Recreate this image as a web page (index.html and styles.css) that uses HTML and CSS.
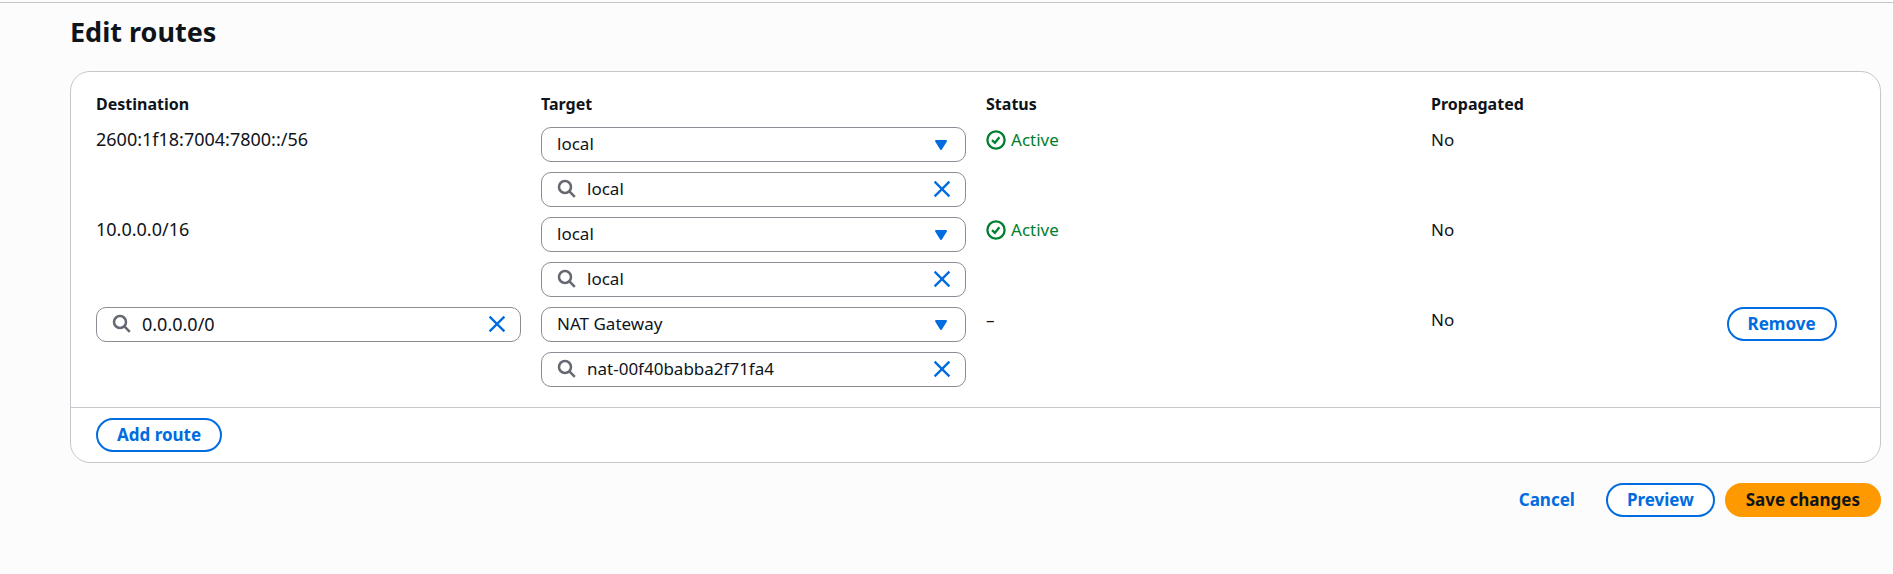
FILE: index.html
```html
<!DOCTYPE html>
<html lang="en">
<head>
<meta charset="utf-8">
<title>Edit routes</title>
<link rel="stylesheet" href="styles.css">
</head>
<body>
<svg class="sprite" aria-hidden="true">
  <symbol id="search" viewBox="0 0 20 20"><g stroke-width="2.5"><circle cx="8" cy="8" r="6" /><path d="M12.4 12.4 17.8 17.8" /></g></symbol>
  <symbol id="close" viewBox="0 0 20 20"><path stroke-width="2.3" d="M2.6 2.6 17.4 17.4M17.4 2.6 2.6 17.4" /></symbol>
  <symbol id="caret" viewBox="0 0 20 20"><path d="M5 6h10L10 14z" /></symbol>
  <symbol id="check" viewBox="0 0 20 20"><g stroke-width="2.3"><circle cx="10" cy="10" r="8.6" /><path d="M6 10.2 8.9 12.8 13.4 7.2" /></g></symbol>
</svg>
<main class="page">
  <h1 class="title">Edit routes</h1>
  <form class="form">
    <section class="card">
      <div class="card-body">
        <table class="routes">
          <colgroup><col class="wide"><col class="wide"><col class="wide"><col class="medium"><col></colgroup>
          <thead>
            <tr><th scope="col">Destination</th><th scope="col">Target</th><th scope="col">Status</th><th scope="col">Propagated</th><td></td></tr>
          </thead>
          <tbody>
            <tr>
              <td class="cidr">2600:1f18:7004:7800::/56</td>
              <td>
                <div class="target">
                  <div class="select"><select aria-label="Target type, route 1"><option>local</option></select><svg class="icon caret"><use href="#caret"/></svg></div>
                  <div class="field"><svg class="icon search"><use href="#search"/></svg><input type="text" aria-label="Target, route 1" value="local"><button type="button" class="clear" aria-label="Clear"><svg class="icon"><use href="#close"/></svg></button></div>
                </div>
              </td>
              <td><span class="status"><svg class="icon"><use href="#check"/></svg>Active</span></td>
              <td>No</td>
              <td></td>
            </tr>
            <tr>
              <td class="cidr">10.0.0.0/16</td>
              <td>
                <div class="target">
                  <div class="select"><select aria-label="Target type, route 2"><option>local</option></select><svg class="icon caret"><use href="#caret"/></svg></div>
                  <div class="field"><svg class="icon search"><use href="#search"/></svg><input type="text" aria-label="Target, route 2" value="local"><button type="button" class="clear" aria-label="Clear"><svg class="icon"><use href="#close"/></svg></button></div>
                </div>
              </td>
              <td><span class="status"><svg class="icon"><use href="#check"/></svg>Active</span></td>
              <td>No</td>
              <td></td>
            </tr>
            <tr>
              <td>
                <div class="field"><svg class="icon search"><use href="#search"/></svg><input class="cidr" type="text" aria-label="Destination, route 3" value="0.0.0.0/0"><button type="button" class="clear" aria-label="Clear"><svg class="icon"><use href="#close"/></svg></button></div>
              </td>
              <td>
                <div class="target">
                  <div class="select"><select aria-label="Target type, route 3"><option>NAT Gateway</option></select><svg class="icon caret"><use href="#caret"/></svg></div>
                  <div class="field"><svg class="icon search"><use href="#search"/></svg><input type="text" aria-label="Target, route 3" value="nat-00f40babba2f71fa4"><button type="button" class="clear" aria-label="Clear"><svg class="icon"><use href="#close"/></svg></button></div>
                </div>
              </td>
              <td>–</td>
              <td>No</td>
              <td><button type="button" class="button">Remove</button></td>
            </tr>
          </tbody>
        </table>
      </div>
      <div class="card-footer"><button type="button" class="button">Add route</button></div>
    </section>
    <div class="actions">
      <button type="button" class="button link">Cancel</button>
      <button type="button" class="button">Preview</button>
      <button type="submit" class="button primary">Save changes</button>
    </div>
  </form>
</main>
</body>
</html>
```
FILE: styles.css
```css
* {
  box-sizing: border-box;
}

body {
  margin: 0;
  padding-top: 2px;
  background: #fcfcfd;
  color: #0f141a;
  font: 17px/25px "Noto Sans", "Open Sans", sans-serif;
}

.sprite {
  display: none;
}

.page {
  border-top: 1px solid #c6c6cd;
  padding: 10px 12px 56px 70px;
}

.title {
  margin: 0 0 20px;
  font-size: 27px;
  line-height: 38px;
  font-weight: 700;
}

.card {
  border: 1px solid #c6c6cd;
  border-radius: 20px;
  background: #fff;
}

.card-body {
  padding: 20px 25px 10px;
}

.card-footer {
  display: flex;
  border-top: 1px solid #c6c6cd;
  padding: 10px 25px;
}

.routes {
  width: 100%;
  table-layout: fixed;
  border-collapse: collapse;
}

.wide {
  width: 25.3%;
}

.medium {
  width: 16.8%;
}

.routes th,
.routes td {
  padding: 0 20px 10px 0;
  text-align: left;
  vertical-align: top;
}

.routes th {
  font-size: 16px;
}

.routes td:last-child {
  padding-right: 0;
}

.routes .cidr {
  font-size: 18px;
}

.target {
  display: grid;
  gap: 10px;
}

.icon {
  display: block;
  width: 20px;
  height: 20px;
  fill: none;
  stroke: currentColor;
  flex: none;
}

.select,
.field {
  height: 35px;
  border: 1px solid #8c8c94;
  border-radius: 10px;
  background: #fff;
}

.select {
  display: grid;
  align-items: center;
}

.select > * {
  grid-area: 1 / 1;
}

.select select {
  appearance: none;
  width: 100%;
  height: 33px;
  margin: 0;
  border: 0;
  padding: 0 44px 2px 15px;
  background: none;
  color: inherit;
  font: inherit;
}

.caret {
  justify-self: end;
  margin-right: 14px;
  color: #006ce0;
  fill: currentColor;
  stroke-width: 2;
  stroke-linejoin: round;
  pointer-events: none;
}

.field {
  display: flex;
  align-items: center;
  padding: 0 13px 2px 15px;
}

.search {
  color: #656871;
}

.field input {
  flex: 1;
  min-width: 0;
  height: 31px;
  border: 0;
  padding: 0 10px;
  background: none;
  color: inherit;
  font: inherit;
}

.clear {
  border: 0;
  padding: 0;
  background: none;
  color: #006ce0;
  cursor: pointer;
}

.status {
  display: flex;
  align-items: center;
  gap: 5px;
  color: #00802f;
}

.button {
  display: block;
  height: 34px;
  border: 2px solid #006ce0;
  border-radius: 17px;
  padding: 0 19px 2px;
  background: #fff;
  color: #006ce0;
  font: 700 17px/25px "Noto Sans", "Open Sans", sans-serif;
  white-space: nowrap;
  cursor: pointer;
}

.link {
  border-color: transparent;
  background: transparent;
}

.primary {
  border-color: #f90;
  background: #f90;
  color: #0f141a;
}

.actions {
  display: flex;
  justify-content: flex-end;
  gap: 10px;
  padding-top: 20px;
}
```
